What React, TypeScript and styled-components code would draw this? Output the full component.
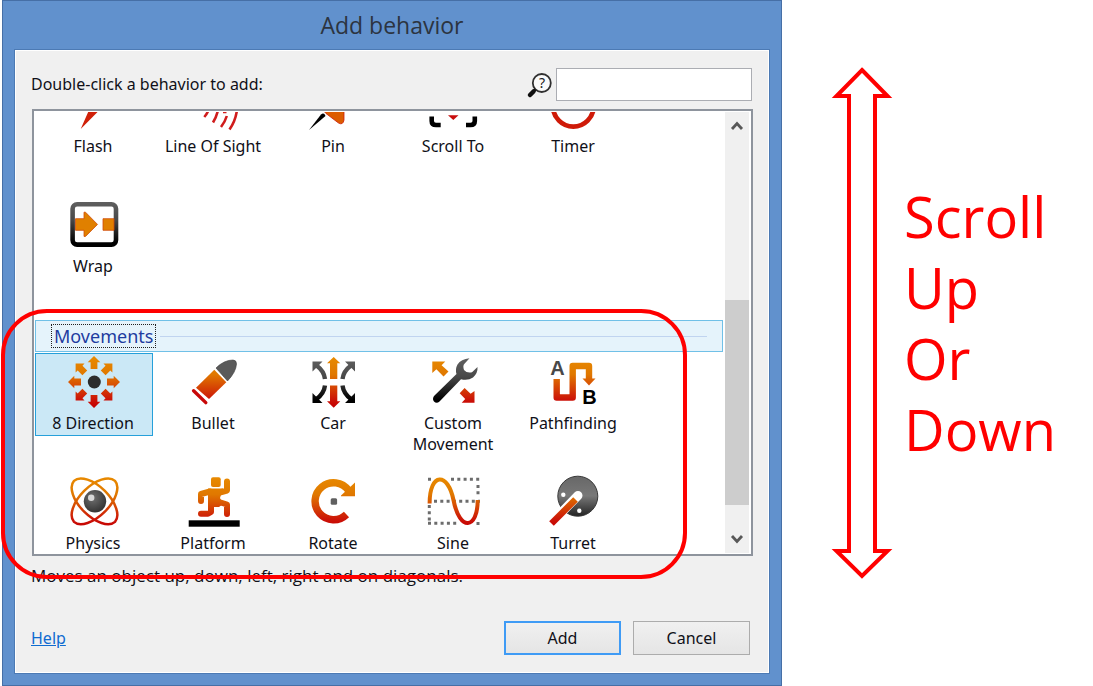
import React from "react";
import styled, { createGlobalStyle } from "styled-components";

const GlobalStyle = createGlobalStyle`
  *, *::before, *::after { box-sizing: border-box; }
  body {
    margin: 0;
    background: #ffffff;
    color: #101018;
    font-family: "Noto Sans", "Open Sans", sans-serif;
    font-size: 16px;
    line-height: 21px;
  }
  button, input { font: inherit; color: inherit; }
`;

const Page = styled.div`
  display: flex;
  align-items: stretch;
  padding-left: 2px;
`;

const Dialog = styled.section`
  flex: 1 1 0;
  min-width: 700px;
  display: flex;
  flex-direction: column;
  padding: 0 11px 11px;
  background: #6191cd;
  border: 1px solid #466fa6;
`;

const TitleBar = styled.h1`
  margin: 0;
  height: 48px;
  font-family: "Open Sans", sans-serif;
  font-size: 23px;
  font-weight: 400;
  line-height: 48px;
  text-align: center;
  color: #2c3440;
`;

const Client = styled.div`
  display: flex;
  flex-direction: column;
  padding: 18px 16px;
  background: #f0f0f0;
  border: 1px solid #4c7ab4;
  box-shadow: inset 1px 1px 0 #ffffff, inset -1px -1px 0 #ffffff;
`;

const SearchRow = styled.div`
  display: flex;
  align-items: center;
  gap: 4px;
  padding-right: 1px;
`;

const Prompt = styled.label`
  flex: 1;
`;

const SearchBox = styled.input`
  width: 196px;
  height: 33px;
  padding: 0 6px;
  background: #ffffff;
  border: 1px solid #abadb3;
  outline: none;
`;

const ListFrame = styled.div`
  position: relative;
  margin: 8px 0 9px 1px;
`;

const ListBox = styled.div`
  display: flex;
  height: 447px;
  padding: 1px 2px 1px 0;
  overflow: hidden;
  background: #ffffff;
  border: 2px solid #8e949d;
`;

const ListView = styled.div`
  flex: 1;
  height: 100%;
  overflow: hidden;
`;

const ListContent = styled.div<{ $scrolled: number }>`
  margin-top: -${(p) => p.$scrolled}px;
  padding: 0 2px 0 1px;
`;

const ItemGrid = styled.div`
  display: grid;
  grid-template-columns: repeat(auto-fill, 118px);
  grid-auto-rows: 120px;
  column-gap: 2px;
  align-items: start;
`;

const Item = styled.button<{ $selected?: boolean }>`
  display: flex;
  flex-direction: column;
  align-items: center;
  gap: 4px;
  padding: 3px 0 1px;
  border: 1px solid ${(p) => (p.$selected ? "#26a0da" : "transparent")};
  background: ${(p) => (p.$selected ? "#cbe8f6" : "transparent")};
`;

const Caption = styled.span`
  max-width: 100px;
  padding-right: 2px;
  white-space: normal;
`;

const GroupHeader = styled.div`
  display: flex;
  align-items: center;
  gap: 4px;
  height: 32px;
  margin: 4px 0 1px;
  padding: 0 15px;
  background: #e5f3fb;
  border: 1px solid #70c0e7;
`;

const GroupTitle = styled.h2`
  margin: 0;
  padding: 0 2px;
  border: 1px dotted #202020;
  font-size: 18px;
  font-weight: 400;
  line-height: 22px;
  color: #1e3ca0;
`;

const GroupRule = styled.span`
  flex: 1;
  height: 1px;
  background: #c0d4f0;
`;

const ScrollBar = styled.div`
  display: flex;
  flex-direction: column;
  width: 24px;
  background: #f0f0f0;
`;

const ScrollStep = styled.button`
  height: 28px;
  padding: 0;
  border: 0;
  background: transparent;
  display: grid;
  place-items: center;
`;

const ScrollTrack = styled.div`
  flex: 1;
  display: flex;
  flex-direction: column;
  justify-content: flex-end;
  padding-bottom: 20px;
`;

const ScrollThumb = styled.div`
  height: 205px;
  background: #cdcdcd;
`;

const Highlight = styled.div`
  position: absolute;
  top: 200px;
  bottom: -23px;
  left: -31px;
  right: 66px;
  border: 4px solid #ff0000;
  border-radius: 46px;
  pointer-events: none;
`;

const Description = styled.p`
  margin: 0;
  font-family: "Open Sans", sans-serif;
  font-size: 17px;
`;

const Footer = styled.div`
  display: flex;
  align-items: center;
  gap: 12px;
  margin-top: 35px;
  padding-right: 3px;
`;

const HelpLink = styled.a`
  margin-right: auto;
  color: #0f6bd0;
  text-decoration: underline;
`;

const PushButton = styled.button<{ $primary?: boolean }>`
  width: 117px;
  height: 34px;
  padding: 0;
  border: ${(p) => (p.$primary ? "2px solid #3f9bf5" : "1px solid #acacac")};
  background: linear-gradient(#f0f0f0, #e5e5e5);
`;

const Note = styled.aside`
  flex: 0 0 311px;
  display: flex;
  align-items: flex-start;
  gap: 12px;
  padding: 67px 0 0 50px;
`;

const NoteText = styled.p`
  margin: 0;
  padding-top: 114px;
  font-family: "Open Sans", sans-serif;
  font-size: 56px;
  line-height: 71px;
  color: #ff0000;
`;

const Icon = styled.svg`
  display: block;
  flex: none;
  overflow: visible;
`;

const FIRE = "url(#fire)";
const COAL = "url(#coal)";

/* Shared vertical gradients, in the 52-unit space every icon is drawn in. */
const IconDefs = () => (
  <svg width="0" height="0" style={{ position: "absolute" }} aria-hidden="true">
    <defs>
      <linearGradient id="fire" gradientUnits="userSpaceOnUse" x1="0" y1="0" x2="0" y2="50">
        <stop offset="0" stopColor="#e88a00" />
        <stop offset="0.35" stopColor="#e07800" />
        <stop offset="0.85" stopColor="#cc1408" />
        <stop offset="1" stopColor="#c40000" />
      </linearGradient>
      <linearGradient id="coal" gradientUnits="userSpaceOnUse" x1="0" y1="0" x2="0" y2="50">
        <stop offset="0" stopColor="#626262" />
        <stop offset="0.4" stopColor="#484848" />
        <stop offset="0.85" stopColor="#000000" />
      </linearGradient>
      <linearGradient id="plate" gradientUnits="userSpaceOnUse" x1="0" y1="0" x2="0" y2="42">
        <stop offset="0" stopColor="#686868" />
        <stop offset="0.45" stopColor="#787878" />
        <stop offset="1" stopColor="#181818" />
      </linearGradient>
      <radialGradient id="ball" cx="0.4" cy="0.35" r="0.7">
        <stop offset="0" stopColor="#707070" />
        <stop offset="1" stopColor="#303030" />
      </radialGradient>
    </defs>
  </svg>
);

/* An arrow of the eight-way ring, turned around the centre of the icon. */
const ringArrow = (degrees: number) => {
  const a = (degrees * Math.PI) / 180;
  const shape = [[0, -26], [6.3, -19.7], [3.4, -19.7], [3.4, -13], [-3.4, -13], [-3.4, -19.7], [-6.3, -19.7]];
  return shape
    .map(([x, y]) => `${26 + x * Math.cos(a) - y * Math.sin(a)},${25 + x * Math.sin(a) + y * Math.cos(a)}`)
    .join(" ");
};

const icons: Record<string, React.ReactNode> = {
  Flash: <path fill="#d02008" d="M33 2 12 29H21.500L12.700 49 36 25.500H27Z" />,
  "Line Of Sight": (
    <g fill="none" stroke="#d01c1c" strokeWidth="2.600">
      <path d="M20.500 30Q19 34 16.300 37M30 30Q28.500 37 25 42.500M38.800 36Q37 42 33 47M49 30Q47.500 41 41.500 49.500M35 32H38.500" />
    </g>
  ),
  Pin: (
    <>
      <path fill="#000" d="M1 50 13 34.500Q16 32 17.500 36Z" />
      <path fill="#dc5c00" stroke="#cc1c08" strokeWidth="0.800" d="M14 29 28 14 36 24V40Q35 45.500 30.500 43L18 33.500Z" />
    </>
  ),
  "Scroll To": (
    <>
      <g fill="none" stroke="#000" strokeWidth="4.600">
        <path d="M3.700 36.500V41Q3.700 45 8 45H12.700M46.800 36.500V41Q46.800 45 42.500 45H38M3.700 14V9Q3.700 5 8 5H12.700M46.800 14V9Q46.800 5 42.500 5H38" />
      </g>
      <path fill="#c80c0c" d="M20 35.300H30.500L25.300 40Z" />
    </>
  ),
  Timer: <circle cx="25.300" cy="26.300" r="20.300" fill="none" stroke="#cf1a08" strokeWidth="4.800" />,
  Wrap: (
    <>
      <rect x="4.600" y="4.200" width="43.400" height="40.400" rx="4.500" fill="none" stroke={COAL} strokeWidth="4.600" />
      <path fill="#e08000" stroke="#cf4a08" strokeWidth="0.800" d="M7.500 18.700H16V12.200H17.500L29.500 24.400 17.500 36.400H16V30.300H7.500ZM46 18.700H35V30.300H46Z" />
    </>
  ),
  "8 Direction": (
    <>
      {[0, 45, 90, 135, 180, 225, 270, 315].map((d) => (
        <polygon key={d} fill={FIRE} points={ringArrow(d)} />
      ))}
      <circle cx="26.300" cy="25" r="6.500" fill="#2c2c2c" />
    </>
  ),
  Bullet: (
    <>
      <path fill="#5a5a5a" stroke="#3c3c3c" strokeWidth="0.600" d="M28 11Q36 3 45 3 48.500 3 48.500 7 48 15 39.500 24Z" />
      <path fill={FIRE} d="M26.300 12.700 38.300 25.300 21 42 8 30.700Z" />
      <path fill="none" stroke="#c80808" strokeWidth="3.400" strokeLinecap="round" d="M5.600 33.800 17.800 45.600" />
    </>
  ),
  Car: (
    <>
      <path fill={FIRE} d="M25.700 0 32.300 6.300H29.300V22H22V6.300H19ZM25.700 50.700 32.300 44.300H29.300V28.500H22V44.300H19Z" />
      <g fill="none" stroke={COAL} strokeWidth="4.400">
        <path d="M34.500 22Q35.500 14 43 8.500M17 22Q16 14 8.500 8.500M34.500 28.500Q35.500 36.500 43 42M17 28.500Q16 36.500 8.500 42" />
      </g>
      <path fill={COAL} d="M37 4.500H47V14.500ZM14.500 4.500H4.500V14.500ZM37 46H47V36ZM14.500 46H4.500V36Z" />
    </>
  ),
  "Custom Movement": (
    <>
      <path fill={FIRE} d="M4.300 4.500H17.300L13.600 8.200 20.500 14.600 15.500 19.600 8.400 12.200 4.300 16ZM46.500 45.700H33.700L37.200 42 31.700 36.200 36.600 31 42.600 36.800 46.500 34Z" />
      <path fill={COAL} d="M41.500 1.300Q33 2 29.500 7.500 27 12 28.500 17L6 39Q4 42 6 44.500 8.500 47 11.500 44.500L33 22.300Q40 24 45 20.500 50 16 49.500 10L44 15.300Q39 16.500 36 13 34.500 8.500 36.500 6.800Z" />
    </>
  ),
  Pathfinding: (
    <>
      <path fill="none" stroke={FIRE} strokeWidth="6.400" strokeLinejoin="round" d="M8.700 22V40.500H24.700V9H41V23" />
      <path fill={FIRE} d="M34.500 21.500H47.500L41 28.500Z" />
      <text x="9.500" y="18" fontFamily="Liberation Sans, sans-serif" fontWeight="700" fontSize="20" textAnchor="middle" fill="#484848">A</text>
      <text x="41.500" y="47" fontFamily="Liberation Sans, sans-serif" fontWeight="700" fontSize="20" textAnchor="middle" fill="#000">B</text>
    </>
  ),
  Physics: (
    <>
      <g fill="none" stroke={FIRE} strokeWidth="2.500">
        <path d="M6 3.800A29 15 45 0 1 47 44.800 29 15 45 0 1 6 3.800Z" />
        <path d="M47 3.800A29 15 -45 0 1 6 44.800 29 15 -45 0 1 47 3.800Z" />
      </g>
      <circle cx="27" cy="24.300" r="11.200" fill="url(#ball)" />
      <circle cx="23.200" cy="20.800" r="3.200" fill="#d8d8d8" />
    </>
  ),
  Platform: (
    <>
      <rect x="0.700" y="43.300" width="51" height="6.400" fill="#000" />
      <rect x="23" y="0.300" width="9.700" height="9.700" rx="2" fill={FIRE} />
      <path fill={FIRE} d="M20 11.500H35L32 21 35 27 31 30 20 30Z" />
      <g fill="none" stroke={FIRE} strokeWidth="6" strokeLinejoin="round" strokeLinecap="round">
        <path d="M39 4.500V13.500L30 16M13 24V17L22 14.500M28 24 39 27.500V37M23 27V35L20 36.800H13" />
      </g>
    </>
  ),
  Rotate: (
    <>
      <path fill="none" stroke={FIRE} strokeWidth="7.400" d="M38.500 37.500A18.500 18.500 0 1 1 40.500 13.300" />
      <path fill={FIRE} d="M47 5.500V19.200H33V18.500Z" />
      <rect x="22.700" y="21.300" width="6.400" height="6.400" rx="1.500" fill="#606060" />
    </>
  ),
  Sine: (
    <>
      <path fill="none" stroke="#6c6c6c" strokeWidth="3" strokeDasharray="3 3.300" d="M0 2.200H5M23 2.200H51.500M50 8V20M50 45V48M1.300 28V44M0 46.300H30M6 24.300H52" />
      <path fill="none" stroke={FIRE} strokeWidth="4" d="M1.600 26.500C1.600 -5 20 -5 25.600 23.500 31.500 54 49.700 53 49.700 23" />
    </>
  ),
  Turret: (
    <>
      <circle cx="29.800" cy="19.200" r="20" fill="url(#plate)" stroke="#383838" strokeWidth="1" />
      <path stroke="#fff" strokeWidth="9" strokeLinecap="round" d="M30 18.500 14 35" />
      <circle cx="15.300" cy="17.700" r="2.200" fill="#fff" />
      <circle cx="31.300" cy="33.800" r="2.200" fill="#fff" />
      <path stroke={FIRE} strokeWidth="6.500" d="M27.500 22.500 3.500 46.500" />
    </>
  ),
};

const SearchIcon = () => (
  <Icon width="25" height="26" viewBox="0 0 25 26" aria-hidden="true">
    <circle cx="14.800" cy="11" r="9" fill="#fafafa" stroke="#303030" strokeWidth="1.800" />
    <path stroke="#101010" strokeWidth="2.500" d="M8.500 17.500 6 20" />
    <path stroke="#101010" strokeWidth="4.500" strokeLinecap="round" d="M6.500 19.500 3 23" />
    <text x="15" y="16" fontSize="14" textAnchor="middle" fill="#202020">?</text>
  </Icon>
);

const Chevron = ({ down = false }: { down?: boolean }) => (
  <Icon width="12" height="10" viewBox="0 0 12 10" aria-hidden="true">
    <path fill="none" stroke="#585858" strokeWidth="2.800" d={down ? "M1 2 6 7.500 11 2" : "M1 8 6 2.500 11 8"} />
  </Icon>
);

const general = ["Flash", "Line Of Sight", "Pin", "Scroll To", "Timer", "Wrap"];
const movements = [
  "8 Direction", "Bullet", "Car", "Custom Movement", "Pathfinding",
  "Physics", "Platform", "Rotate", "Sine", "Turret",
];

const Behaviors = ({ names, selected }: { names: string[]; selected?: string }) => (
  <ItemGrid>
    {names.map((name) => (
      <Item key={name} type="button" $selected={name === selected} aria-pressed={name === selected}>
        <Icon width="52" height="52" viewBox="0 0 52 52" aria-hidden="true">{icons[name]}</Icon>
        <Caption>{name}</Caption>
      </Item>
    ))}
  </ItemGrid>
);

export default function App() {
  return (
    <>
      <GlobalStyle />
      <IconDefs />
      <Page>
        <Dialog aria-labelledby="dialog-title">
          <TitleBar id="dialog-title">Add behavior</TitleBar>
          <Client>
            <SearchRow>
              <Prompt htmlFor="search">Double-click a behavior to add:</Prompt>
              <SearchIcon />
              <SearchBox id="search" type="text" />
            </SearchRow>
            <ListFrame>
              <ListBox>
                <ListView>
                  <ListContent $scrolled={36}>
                    <Behaviors names={general} />
                    <GroupHeader>
                      <GroupTitle>Movements</GroupTitle>
                      <GroupRule />
                    </GroupHeader>
                    <Behaviors names={movements} selected="8 Direction" />
                  </ListContent>
                </ListView>
                <ScrollBar>
                  <ScrollStep type="button" aria-label="Scroll up"><Chevron /></ScrollStep>
                  <ScrollTrack><ScrollThumb /></ScrollTrack>
                  <ScrollStep type="button" aria-label="Scroll down"><Chevron down /></ScrollStep>
                </ScrollBar>
              </ListBox>
              <Highlight />
            </ListFrame>
            <Description>Moves an object up, down, left, right and on diagonals.</Description>
            <Footer>
              <HelpLink href="#help">Help</HelpLink>
              <PushButton type="button" $primary>Add</PushButton>
              <PushButton type="button">Cancel</PushButton>
            </Footer>
          </Client>
        </Dialog>
        <Note>
          <Icon width="60" height="512" viewBox="0 0 60 512" aria-hidden="true">
            <path fill="#fff" stroke="#ff0000" strokeWidth="4" d="M30 3 55.500 29H43V484H55.500L30 509 4.500 484H17V29H4.500Z" />
          </Icon>
          <NoteText>Scroll<br />Up<br />Or<br />Down</NoteText>
        </Note>
      </Page>
    </>
  );
}
